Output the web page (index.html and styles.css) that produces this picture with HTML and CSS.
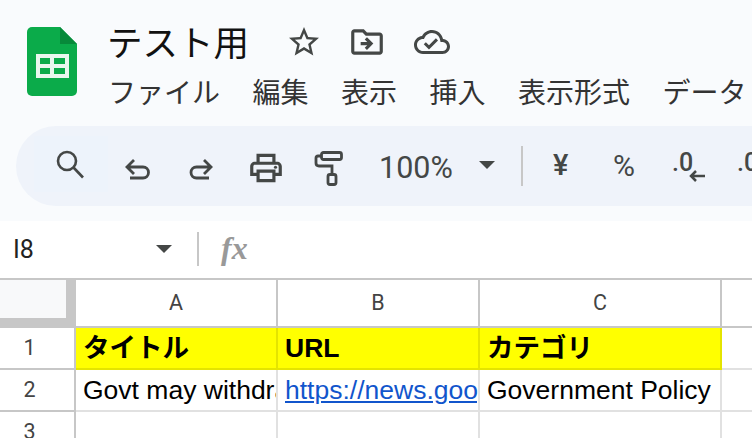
FILE: index.html
```html
<!DOCTYPE html>
<html lang="ja">
<head>
<meta charset="utf-8">
<title>テスト用</title>
<link rel="stylesheet" href="styles.css">
</head>
<body>
<header class="top">
  <div class="titlebar">
    <svg class="logo" width="50" height="70" viewBox="0 0 50 70">
      <path d="M5 0H33L50 17V64a5 5 0 0 1-5 5H5a5 5 0 0 1-5-5V5a5 5 0 0 1 5-5z" fill="#0bab4a"/>
      <path d="M33 0L50 17H33z" fill="#078a3a"/>
      <path d="M9 27H42V51H9z M13 31V37H23V31z M27 31V37H38V31z M13 41V47H23V41z M27 41V47H38V41z" fill="#e9f7ee" fill-rule="evenodd"/>
    </svg>
    <div class="titlecol">
      <div class="titlerow">
        <span class="doc">テスト用</span>
        <svg class="star" width="36" height="36" viewBox="0 0 24 24"><path fill="#444746" d="M22 9.24l-7.19-.62L12 2 9.19 8.63 2 9.24l5.46 4.73L5.82 21 12 17.27 18.18 21l-1.63-7.03L22 9.24zM12 15.4l-3.76 2.27 1-4.28-3.32-2.88 4.38-.38L12 6.1l1.71 4.04 4.38.38-3.32 2.88 1 4.28L12 15.4z"/></svg>
        <svg class="move" width="38" height="38" viewBox="0 0 24 24"><path fill="#444746" d="M20 6h-8l-2-2H4c-1.1 0-1.99.9-1.99 2L2 18c0 1.1.9 2 2 2h16c1.1 0 2-.9 2-2V8c0-1.1-.9-2-2-2zm0 12H4V6h5.17l2 2H20v10zm-8.01-9l-1.41 1.41L12.16 12H8v2h4.16l-1.59 1.59L11.99 17 16 13.01 11.99 9z"/></svg>
        <svg class="cloud" width="36" height="36" viewBox="0 0 24 24"><path fill="#444746" d="M19.35 10.04C18.67 6.59 15.64 4 12 4 9.11 4 6.6 5.64 5.35 8.04 2.34 8.36 0 10.91 0 14c0 3.31 2.69 6 6 6h13c2.76 0 5-2.24 5-5 0-2.64-2.05-4.78-4.65-4.96zM19 18H6c-2.21 0-4-1.79-4-4 0-2.05 1.53-3.76 3.56-3.97l1.07-.11.5-.95C8.08 7.14 9.94 6 12 6c2.62 0 4.88 1.86 5.39 4.43l.3 1.5 1.53.11c1.56.1 2.78 1.41 2.78 2.96 0 1.65-1.35 3-3 3zm-9-3.82l-2.09-2.09L6.5 13.5 10 17l6.01-6.01-1.41-1.41z"/></svg>
      </div>
      <nav class="menu">
        <span>ファイル</span><span>編集</span><span>表示</span><span>挿入</span><span>表示形式</span><span>データ</span>
      </nav>
    </div>
  </div>
  <div class="toolbar">
    <div class="searchbox">
      <svg width="34" height="34" viewBox="0 0 34 34" fill="none" stroke="#444746" stroke-width="2.6"><circle cx="13" cy="13" r="9"/><path d="M19.500 19.500L29 29.500"/></svg>
    </div>
    <svg class="undo" width="28" height="28" viewBox="0 0 28 28" fill="none" stroke="#444746" stroke-width="2.800"><path d="M10 4L3 11l7 7M3 11H19a5.500 5.500 0 0 1 0 11H6"/></svg>
    <svg class="redo" width="28" height="28" viewBox="0 0 28 28" fill="none" stroke="#444746" stroke-width="2.800"><path d="M17 4l7 7-7 7M24 11H9.500a5.500 5.500 0 0 0 0 11H22"/></svg>
    <svg class="print" width="38" height="38" viewBox="0 0 24 24"><path fill="#444746" d="M19 8h-1V3H6v5H5c-1.66 0-3 1.34-3 3v6h4v4h12v-4h4v-6c0-1.66-1.34-3-3-3zM8 5h8v3H8V5zm8 12v2H8v-4h8v2zm2-2v-2H6v2H4v-4c0-.55.45-1 1-1h14c.55 0 1 .45 1 1v4h-2z"/><circle fill="#444746" cx="18" cy="11.5" r="1"/></svg>
    <svg class="roller" width="30" height="36" viewBox="0 0 30 36" fill="none" stroke="#444746" stroke-width="2.800"><rect x="7.500" y="2.500" width="20" height="7" rx="2"/><path d="M7 6H4Q2 6 2 8V13Q2 16 5 16H18V24"/><rect x="14" y="24.500" width="8" height="10" rx="2"/></svg>
    <span class="zoomval">100%</span>
    <span class="caret zoomcaret"></span>
    <span class="sep"></span>
    <span class="sym yen">¥</span>
    <span class="sym pct">%</span>
    <span class="dec">.0<svg class="arrow" width="16" height="12" viewBox="0 0 16 12" fill="none" stroke="#444746" stroke-width="2.500"><path d="M16 6H2M7 1L2 6l5 5"/></svg></span>
    <span class="dec dec2">.0</span>
  </div>
</header>
<section class="formula">
  <span class="namebox">I8</span>
  <span class="caret namecaret"></span>
  <span class="fsep"></span>
  <span class="fx">fx</span>
</section>
<section class="sheet">
  <div class="corner"></div>
  <div class="colhead">A</div>
  <div class="colhead">B</div>
  <div class="colhead">C</div>
  <div class="colhead blank"></div>

  <div class="rowhead">1</div>
  <div class="cell hdr">タイトル</div>
  <div class="cell hdr">URL</div>
  <div class="cell hdr">カテゴリ</div>
  <div class="cell blank"></div>

  <div class="rowhead">2</div>
  <div class="cell">Govt may withdraw</div>
  <div class="cell"><a class="link">https://news.google.com</a></div>
  <div class="cell">Government Policy</div>
  <div class="cell blank"></div>

  <div class="rowhead">3</div>
  <div class="cell"></div>
  <div class="cell"></div>
  <div class="cell"></div>
  <div class="cell blank"></div>
</section>
</body>
</html>
```
FILE: styles.css
```css
* { box-sizing: border-box; }
html, body { margin: 0; padding: 0; }
body {
  width: 752px;
  height: 438px;
  overflow: hidden;
  background: #fff;
  font-family: "Noto Sans CJK JP", "Liberation Sans", sans-serif;
}
.top {
  height: 221px;
  background: #f9fbfd;
  padding-top: 17px;
  overflow: hidden;
}
.titlebar {
  display: flex;
  height: 109px;
  padding-left: 27px;
}
.logo { margin-top: 10px; flex: none; }
.titlecol { margin-left: 30px; flex: none; }
.titlerow { display: flex; align-items: center; height: 48px; }
.doc { font-size: 35.500px; line-height: 48px; color: #111; width: 179px; white-space: nowrap; }
.star { margin-top: 1px; }
.move { margin-left: 26px; margin-top: 1px; }
.cloud { margin-left: 28px; margin-top: 1px; }
.menu {
  display: flex;
  gap: 32.500px;
  margin-top: 4px;
  margin-left: 1px;
  font-size: 28px;
  line-height: 44px;
  color: #333;
  white-space: nowrap;
}
.toolbar {
  display: flex;
  align-items: center;
  height: 80px;
  margin-left: 16px;
  background: #eff3fa;
  border-radius: 40px 0 0 40px;
  padding-left: 18px;
  color: #444746;
  white-space: nowrap;
}
.searchbox {
  width: 74px;
  height: 56px;
  flex: none;
  background: #edf3fb;
  padding: 12px 0 0 20px;
  margin-top: -4px;
}
.searchbox svg { display: block; }
.undo { margin-left: 16px; margin-top: 8px; flex: none; }
.redo { margin-left: 35px; margin-top: 8px; flex: none; }
.print { margin-left: 32px; flex: none; margin-top: 4px; }
.roller { margin-left: 29px; flex: none; margin-top: 4px; }
.zoomval {
  flex: none;
  margin-left: 35px;
  font-family: Roboto, sans-serif;
  font-size: 30.500px;
  width: 100px;
  margin-top: 2px;
}
.caret {
  width: 0;
  height: 0;
  flex: none;
  border-left: 8px solid transparent;
  border-right: 8px solid transparent;
  border-top: 8px solid #444746;
}
.zoomcaret { margin-top: -2px; }
.sep { width: 2px; height: 40px; background: #c7c7c7; margin-left: 26px; flex: none; }
.sym { font-family: Roboto, sans-serif; flex: none; margin-top: -2px; }
.yen { margin-left: 30px; width: 31px; font-size: 29px; font-weight: 500; }
.pct { margin-left: 29px; width: 33px; font-size: 30px; }
.dec {
  position: relative;
  font-family: Roboto, sans-serif;
  font-size: 25px;
  font-weight: 500;
  margin-left: 26px;
  margin-top: -8px;
  width: 65px;
  flex: none;
}
.arrow { position: absolute; left: 17px; top: 22px; }
.dec2 { margin-left: 0; }
.formula {
  display: flex;
  align-items: center;
  height: 59px;
  border-bottom: 2px solid #c7c7c7;
  padding-left: 13px;
}
.namebox { font-family: Roboto, sans-serif; font-size: 25px; color: #222; width: 143px; margin-top: -1px; }
.namecaret { margin-top: -2px; }
.fsep { width: 2px; height: 34px; background: #c7c7c7; margin-left: 25px; margin-top: -2px; }
.fx {
  margin-left: 22px;
  font-family: "Liberation Serif", serif;
  font-style: italic;
  font-weight: 700;
  font-size: 32px;
  color: #999;
  margin-top: -3px;
}
.sheet {
  display: grid;
  grid-template-columns: 76px 202px 202px 242px 30px;
  grid-template-rows: 48px 42px 42px 42px;
  font-family: "Liberation Sans", "Noto Sans CJK JP", sans-serif;
}
.corner {
  background: #f8f9fa;
  border-right: 10px solid #c7c7c7;
  border-bottom: 10px solid #c7c7c7;
}
.colhead {
  display: flex;
  align-items: center;
  justify-content: center;
  font-family: Roboto, "Liberation Sans", sans-serif;
  font-size: 21.500px;
  color: #444;
  border-right: 2px solid #c7c7c7;
  border-bottom: 2px solid #c7c7c7;
  padding-bottom: 2px;
}
.rowhead {
  display: flex;
  align-items: center;
  justify-content: center;
  font-family: Roboto, "Liberation Sans", sans-serif;
  font-size: 21.500px;
  color: #444;
  padding-right: 15px;
  border-right: 2px solid #c7c7c7;
  border-bottom: 2px solid #c7c7c7;
  padding-bottom: 2px;
}
.cell {
  font-size: 26.500px;
  line-height: 41px;
  padding-left: 7px;
  color: #000;
  white-space: nowrap;
  overflow: hidden;
  border-right: 2px solid #e1e1e1;
  border-bottom: 2px solid #e1e1e1;
}
.cell.hdr {
  background: #ff0;
  font-weight: 700;
  border-color: #e4e400;
}
.link { color: #1155cc; text-decoration: underline; }
.blank { border-right: 0; }
```
